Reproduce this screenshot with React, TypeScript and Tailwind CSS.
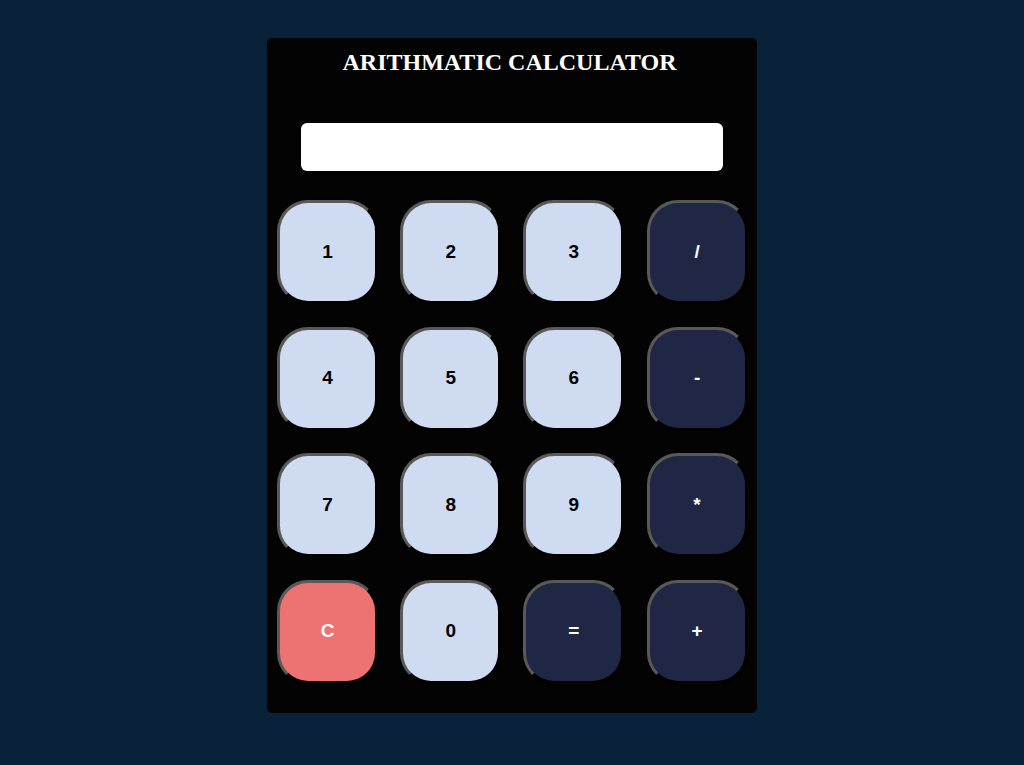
import React from "react";

type Key = { label: string; kind: "num" | "op" | "clear" };

const keys: Key[] = [
  { label: "1", kind: "num" },
  { label: "2", kind: "num" },
  { label: "3", kind: "num" },
  { label: "/", kind: "op" },
  { label: "4", kind: "num" },
  { label: "5", kind: "num" },
  { label: "6", kind: "num" },
  { label: "-", kind: "op" },
  { label: "7", kind: "num" },
  { label: "8", kind: "num" },
  { label: "9", kind: "num" },
  { label: "*", kind: "op" },
  { label: "C", kind: "clear" },
  { label: "0", kind: "num" },
  { label: "=", kind: "op" },
  { label: "+", kind: "op" },
];

const kindClass = {
  num: "bg-[#cfdbf0] text-black",
  op: "bg-[#1f2744] text-white",
  clear: "bg-[#ec7372] text-white",
};

export default function App() {
  return (
    <div className="min-h-screen bg-[#0a2239] flex justify-center pt-[38px]">
      <div className="w-[490px] h-[675px] bg-[#030303] rounded-[5px] flex flex-col">
        <h1
          className="text-white text-2xl font-bold text-center leading-[27px] pt-[11px] pr-[5px]"
          style={{ fontFamily: '"Liberation Serif", "Times New Roman", serif' }}
        >
          ARITHMATIC CALCULATOR
        </h1>
        <div className="flex justify-center mt-[47px]">
          <input
            type="text"
            className="w-[422px] h-[48px] bg-white rounded-[6px] outline-none px-3"
          />
        </div>
        <div className="grid grid-cols-[repeat(4,101px)] gap-x-[22.2px] gap-y-[22.5px] pl-[10px] mt-[29px]">
          {keys.map((k) => (
            <button
              key={k.label}
              className={`w-[101px] h-[104px] rounded-[31px] border-[3px] border-t-[#595959] border-l-[#595959] border-r-[#000] border-b-[#000] text-[19px] font-bold ${kindClass[k.kind]}`}
              style={{ fontFamily: '"Liberation Sans", Arial, sans-serif' }}
            >
              {k.label}
            </button>
          ))}
        </div>
      </div>
    </div>
  );
}
